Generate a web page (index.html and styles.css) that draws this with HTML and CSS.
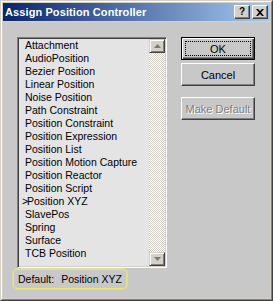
FILE: index.html
```html
<!DOCTYPE html>
<html>
<head>
<meta charset="utf-8">
<link rel="stylesheet" href="styles.css">
</head>
<body>
<div class="window">
  <div class="frame">
    <div class="caption">
      <span class="title">Assign Position Controller</span>
      <div class="cap-buttons">
        <span class="cap-btn help">?</span>
        <span class="cap-btn close">
          <svg width="8" height="7" viewBox="0 0 8 7"><path d="M0 0h2l2 2 2-2h2L5 3.5 8 7H6L4 5 2 7H0l3-3.5z" fill="#000"/></svg>
        </span>
      </div>
    </div>
    <div class="client">
      <div class="left">
        <div class="listbox">
          <ul class="items">
            <li>Attachment</li>
            <li>AudioPosition</li>
            <li>Bezier Position</li>
            <li>Linear Position</li>
            <li>Noise Position</li>
            <li>Path Constraint</li>
            <li>Position Constraint</li>
            <li>Position Expression</li>
            <li>Position List</li>
            <li>Position Motion Capture</li>
            <li>Position Reactor</li>
            <li>Position Script</li>
            <li class="cur"><span class="mark">&gt;</span>Position XYZ</li>
            <li>SlavePos</li>
            <li>Spring</li>
            <li>Surface</li>
            <li>TCB Position</li>
          </ul>
          <div class="scrollbar">
            <div class="arrow up"><svg width="7" height="4" viewBox="0 0 7 4"><path d="M3.5 0L7 4H0z" fill="#7a7a7a"/></svg></div>
            <div class="track"></div>
            <div class="arrow down"><svg width="7" height="4" viewBox="0 0 7 4"><path d="M0 0h7L3.5 4z" fill="#7a7a7a"/></svg></div>
          </div>
        </div>
        <div class="default-box"><span>Default:</span><span class="val">Position XYZ</span></div>
      </div>
      <div class="buttons">
        <div class="btn default"><span class="focus">OK</span></div>
        <div class="btn">Cancel</div>
        <div class="btn disabled gap">Make Default</div>
      </div>
    </div>
  </div>
</div>
</body>
</html>
```
FILE: styles.css
```css
html, body {
  margin: 0;
  padding: 0;
  background: #c8c8c8;
}
.window {
  width: 273px;
  height: 301px;
  box-sizing: border-box;
  border: 1px solid;
  border-color: #d4d0c8 #404040 #404040 #d4d0c8;
  font-family: "Liberation Sans", Arial, sans-serif;
  font-size: 10.5px;
  color: #000;
}
.frame {
  height: 100%;
  box-sizing: border-box;
  border: 1px solid;
  border-color: #fff #808080 #808080 #fff;
  padding: 1px;
  background: #d4d0c8;
  display: flex;
  flex-direction: column;
}
.caption {
  height: 18px;
  flex: none;
  background: linear-gradient(to right, #0a246a, #a6caf0);
  display: flex;
  align-items: center;
  justify-content: space-between;
  padding: 0 2px 0 2px;
  margin-bottom: 1px;
}
.title {
  color: #fff;
  font-weight: bold;
  font-size: 11px;
  letter-spacing: 0.1px;
}
.cap-buttons {
  display: flex;
  gap: 2px;
}
.cap-btn {
  width: 16px;
  height: 14px;
  box-sizing: border-box;
  background: #d4d0c8;
  border: 1px solid;
  border-color: #fff #404040 #404040 #fff;
  box-shadow: inset -1px -1px 0 #808080;
  display: flex;
  align-items: center;
  justify-content: center;
  font-weight: bold;
  font-size: 10px;
  line-height: 1;
}
.client {
  flex: 1;
  background: #c8c8c8;
  display: flex;
  padding: 15px 0 0 10px;
}
.left {
  display: flex;
  flex-direction: column;
}
.listbox {
  margin-left: 4px;
  width: 150px;
  height: 231px;
  box-sizing: border-box;
  border: 1px solid;
  border-color: #808080 #fff #fff #808080;
  box-shadow: inset 1px 1px 0 #404040, inset -1px -1px 0 #d4d0c8;
  padding: 1px;
  background: #e4e4e4;
  display: flex;
}
.items {
  list-style: none;
  margin: 0;
  padding: 0 0 0 6px;
  flex: 1;
}
.items li {
  height: 13px;
  line-height: 13px;
  white-space: nowrap;
}
.mark {
  display: inline-block;
  width: 5px;
  margin-left: -3px;
}
.scrollbar {
  width: 16px;
  display: flex;
  flex-direction: column;
}
.arrow {
  height: 14px;
  box-sizing: border-box;
  background: #d4d0c8;
  border: 1px solid;
  border-color: #d4d0c8 #404040 #404040 #d4d0c8;
  box-shadow: inset 1px 1px 0 #fff, inset -1px -1px 0 #808080;
  display: flex;
  align-items: center;
  justify-content: center;
}
.track {
  flex: 1;
  background: repeating-conic-gradient(#fff 0 25%, #d4d0c8 0 50%) 0 0 / 2px 2px;
}
.default-box {
  margin-top: 1px;
  width: 114px;
  height: 20px;
  box-sizing: border-box;
  border: 1px solid #e6e67a;
  box-shadow: 0 0 0 1px #d8d8a0;
  border-radius: 4px;
  display: flex;
  align-items: center;
  padding-left: 4px;
  gap: 7px;
}
.buttons {
  margin-left: 14px;
  display: flex;
  flex-direction: column;
  gap: 3px;
}
.btn {
  width: 74px;
  height: 23px;
  box-sizing: border-box;
  background: #c8c8c8;
  border: 1px solid;
  border-color: #fff #404040 #404040 #fff;
  box-shadow: inset -1px -1px 0 #808080;
  display: flex;
  align-items: center;
  justify-content: center;
  font-size: 11px;
}
.btn.default {
  border: 1px solid #000;
  box-shadow: inset 1px 1px 0 #fff, inset -1px -1px 0 #404040, inset -2px -2px 0 #808080;
  padding: 3px;
}
.focus {
  flex: 1;
  align-self: stretch;
  border: 1px dotted #000;
  display: flex;
  align-items: center;
  justify-content: center;
}
.btn.gap {
  margin-top: 8px;
}
.btn.disabled {
  color: #808080;
  text-shadow: 1px 1px 0 #fff;
}
```
